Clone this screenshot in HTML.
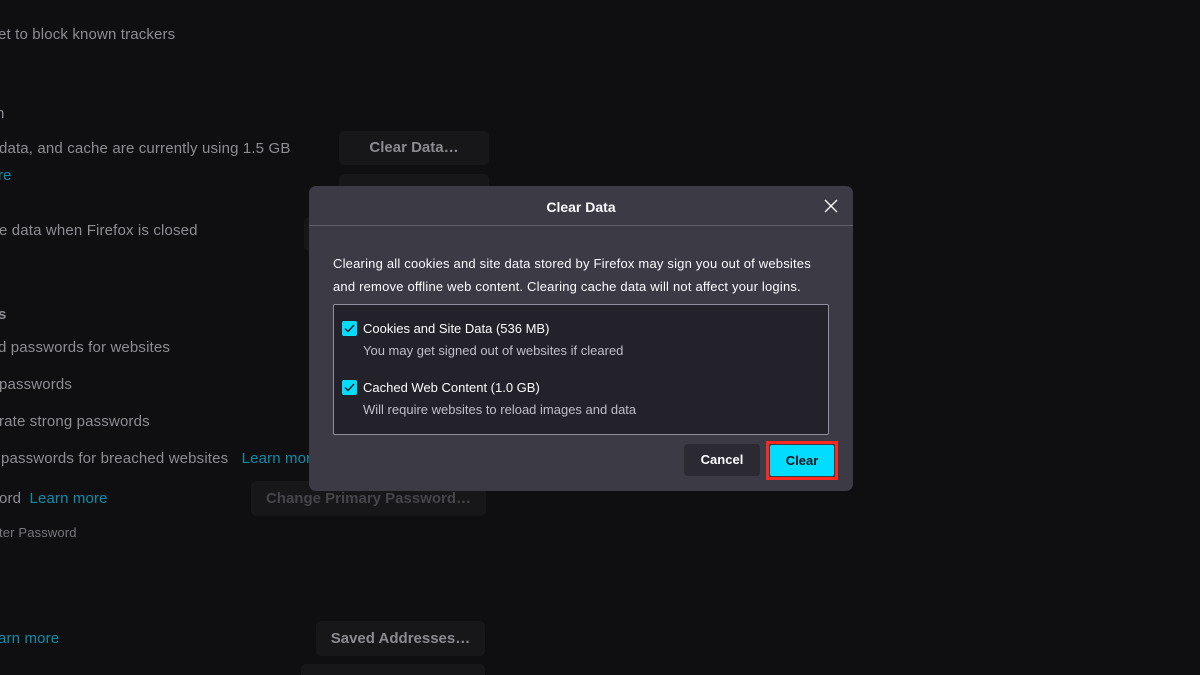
<!DOCTYPE html>
<html style="width:1200px;height:675px;overflow:hidden"><head><meta charset="utf-8"><style>
*{margin:0;padding:0;box-sizing:border-box}
body{width:1200px;height:675px;background:#0f0f12;font-family:"Liberation Sans",sans-serif;position:relative;overflow:hidden;color:#8b8b90}
.t{position:absolute;font-size:15px;white-space:nowrap;color:#8d8d92;letter-spacing:0.15px}
.l{color:#0b8ea5}
.b{position:absolute;background:#17171a;border-radius:5px;color:#6f6f74;font-weight:bold;font-size:15px;text-align:center}
#dlg{position:absolute;left:309px;top:186px;width:544px;height:305px;background:#3b3a45;border-radius:7px}
#hd{height:40px;border-bottom:1px solid #5f5e68;text-align:center;line-height:43px;color:#fbfbfe;font-weight:bold;font-size:14px}
.x{position:absolute;right:15px;top:13px}
#p{position:absolute;left:24px;top:66px;font-size:13px;line-height:23px;color:#fbfbfe;width:510px;letter-spacing:0.2px;white-space:nowrap}
#box{position:absolute;left:24px;top:118px;width:496px;height:131px;background:#23222b;border:1px solid #8f8f9d;border-radius:2px}
.cb{position:absolute;left:8px;width:15px;height:15px;background:#00ddff;border-radius:2px}
.lab{position:absolute;left:29px;font-size:13px;color:#fbfbfe;white-space:nowrap}
.sub{position:absolute;left:29px;font-size:13px;color:#bfbfc9;white-space:nowrap}
#cancel{position:absolute;left:375px;top:258px;width:76px;height:32px;background:#2b2a33;border-radius:4px;color:#fbfbfe;font-weight:bold;font-size:13px;text-align:center;line-height:32px}
#red{position:absolute;left:457px;top:255px;width:72px;height:39px;border:3px solid #ff2a1f}
#clear{position:absolute;left:1px;top:1px;width:64px;height:31px;background:#00ddff;color:#15141a;font-weight:bold;font-size:13px;text-align:center;line-height:31px;border-radius:2px}
</style></head><body>
<div class="t" style="left:-2px;top:26px">et to block known trackers</div>
<div class="t" style="left:-4px;top:105px">n</div>
<div class="t" style="left:-1px;top:140px">data, and cache are currently using 1.5 GB</div>
<div class="t l" style="left:-2px;top:167px">re</div>
<div class="t" style="left:-1px;top:222px">e data when Firefox is closed</div>
<div class="t" style="left:-2px;top:306px;font-weight:bold">s</div>
<div class="t" style="left:-2px;top:339px">d passwords for websites</div>
<div class="t" style="left:-1px;top:376px">passwords</div>
<div class="t" style="left:-1px;top:413px">rate strong passwords</div>
<div class="t" style="left:1px;top:450px">passwords for breached websites <span class="l" style="margin-left:9px">Learn more</span></div>
<div class="t" style="left:-1px;top:490px">ord <span class="l" style="margin-left:4px">Learn more</span></div>
<div class="t" style="left:-1px;top:525px;font-size:13px;color:#77777c">ter Password</div>
<div class="t l" style="left:-2px;top:630px">arn more</div>
<div class="b" style="left:339px;top:131px;width:150px;height:34px;line-height:34px;color:#8a8a8f">Clear Data…</div>
<div class="b" style="left:339px;top:174px;width:150px;height:34px"></div>
<div class="b" style="left:304px;top:217px;width:30px;height:34px"></div>
<div class="b" style="left:251px;top:481px;width:235px;height:35px;line-height:35px;color:#45454a">Change Primary Password…</div>
<div class="b" style="left:316px;top:621px;width:169px;height:35px;line-height:35px;color:#8a8a8f">Saved Addresses…</div>
<div class="b" style="left:301px;top:664px;width:184px;height:11px;border-radius:5px 5px 0 0"></div>
<div id="dlg">
<div id="hd">Clear Data</div>
<svg class="x" width="14" height="14" viewBox="0 0 14 14"><path d="M1 1L13 13M13 1L1 13" stroke="#fbfbfe" stroke-width="1.4"/></svg>
<div id="p">Clearing all cookies and site data stored by Firefox may sign you out of websites<br>and remove offline web content. Clearing cache data will not affect your logins.</div>
<div id="box">
<div class="cb" style="top:16px"><svg width="15" height="15" viewBox="0 0 15 15"><path d="M3 7.5L6 10.5L12 4" stroke="#15141a" stroke-width="1.3" fill="none"/></svg></div>
<div class="lab" style="top:16px">Cookies and Site Data (536 MB)</div>
<div class="sub" style="top:38px">You may get signed out of websites if cleared</div>
<div class="cb" style="top:75px"><svg width="15" height="15" viewBox="0 0 15 15"><path d="M3 7.5L6 10.5L12 4" stroke="#15141a" stroke-width="1.3" fill="none"/></svg></div>
<div class="lab" style="top:75px">Cached Web Content (1.0 GB)</div>
<div class="sub" style="top:97px">Will require websites to reload images and data</div>
</div>
<div id="cancel">Cancel</div>
<div id="red"><div id="clear">Clear</div></div>
</div>
</body></html>
